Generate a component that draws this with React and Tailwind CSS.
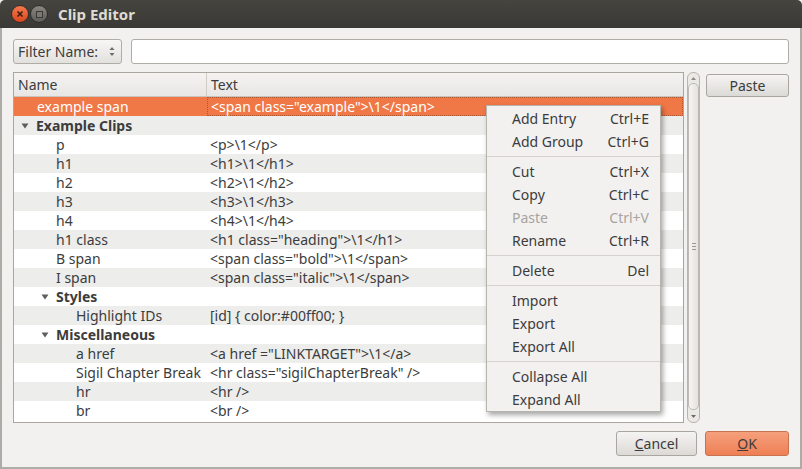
import React from "react";

const FONT = { fontFamily: '"Noto Sans", "Open Sans", sans-serif' };

const rows = [
  { name: "example span", text: '<span class="example">\\1</span>', indent: 37, selected: true },
  { name: "Example Clips", group: true, arrow: 21, indent: 36 },
  { name: "p", text: "<p>\\1</p>", indent: 56 },
  { name: "h1", text: "<h1>\\1</h1>", indent: 56 },
  { name: "h2", text: "<h2>\\1</h2>", indent: 56 },
  { name: "h3", text: "<h3>\\1</h3>", indent: 56 },
  { name: "h4", text: "<h4>\\1</h4>", indent: 56 },
  { name: "h1 class", text: '<h1 class="heading">\\1</h1>', indent: 56 },
  { name: "B span", text: '<span class="bold">\\1</span>', indent: 56 },
  { name: "I span", text: '<span class="italic">\\1</span>', indent: 56 },
  { name: "Styles", group: true, arrow: 41, indent: 56 },
  { name: "Highlight IDs", text: "[id] { color:#00ff00; }", indent: 76 },
  { name: "Miscellaneous", group: true, arrow: 41, indent: 56 },
  { name: "a href", text: '<a href ="LINKTARGET">\\1</a>', indent: 76 },
  { name: "Sigil Chapter Break", text: '<hr class="sigilChapterBreak" />', indent: 76 },
  { name: "hr", text: "<hr />", indent: 76 },
  { name: "br", text: "<br />", indent: 76 },
];

const menu = [
  [["Add Entry", "Ctrl+E"], ["Add Group", "Ctrl+G"]],
  [["Cut", "Ctrl+X"], ["Copy", "Ctrl+C"], ["Paste", "Ctrl+V", true], ["Rename", "Ctrl+R"]],
  [["Delete", "Del"]],
  [["Import"], ["Export"], ["Export All"]],
  [["Collapse All"], ["Expand All"]],
];

function Arrow() {
  return (
    <svg width="8" height="6" viewBox="0 0 8 6" className="shrink-0">
      <path d="M0.5 0.5 L7.5 0.5 L4 5.5 Z" fill="#5f5e5a" />
    </svg>
  );
}

function TreeRow({ r, i }) {
  const bg = r.selected ? "bg-[#f07746]" : i % 2 === 1 ? "bg-[#ededec]" : "bg-white";
  const color = r.selected ? "text-white" : "text-[#3c3c3c]";
  return (
    <div className={`flex h-[19px] items-center ${bg} ${color}`}>
      <div className="relative h-full w-[193px] shrink-0 flex items-center">
        {r.group && (
          <span className="absolute top-[7px]" style={{ left: r.arrow - 14 }}>
            <Arrow />
          </span>
        )}
        <span
          className={`whitespace-nowrap ${r.group ? "font-bold" : ""}`}
          style={{ paddingLeft: r.indent - 14 }}
        >
          {r.name}
        </span>
      </div>
      <div
        className={`h-full flex-1 flex items-center pl-[3px] whitespace-nowrap ${
          r.selected ? "border border-dotted border-[#b3532b]" : ""
        }`}
      >
        {r.text}
      </div>
    </div>
  );
}

function Scrollbar() {
  return (
    <div className="ml-[3px] w-[13px] h-[351px] rounded-[6px] border border-[#b8b5ae] bg-[#ebe9e6] flex flex-col items-center">
      <div className="h-[10px] flex items-center justify-center">
        <svg width="5" height="3" viewBox="0 0 5 3"><path d="M0 3 L2.5 0 L5 3 Z" fill="#8e8b85" /></svg>
      </div>
      <div className="flex-1 w-[11px] rounded-[5px] border border-[#bdbab4] bg-gradient-to-r from-[#f6f5f4] to-[#e4e2de] flex items-center justify-center">
        <div className="flex flex-col gap-[2px]">
          <div className="w-[4px] h-px bg-[#9c9891]" />
          <div className="w-[4px] h-px bg-[#9c9891]" />
          <div className="w-[4px] h-px bg-[#9c9891]" />
        </div>
      </div>
      <div className="h-[12px] flex items-center justify-center">
        <svg width="5" height="3" viewBox="0 0 5 3"><path d="M0 0 L2.5 3 L5 0 Z" fill="#6e6b65" /></svg>
      </div>
    </div>
  );
}

function Button({ children, primary, className = "" }) {
  return (
    <div
      className={`flex items-center justify-center rounded-[3px] border ${
        primary
          ? "border-[#c8734f] bg-gradient-to-b from-[#f5a07c] to-[#ee7f55] text-[#3c3c3c]"
          : "border-[#a9a69f] bg-gradient-to-b from-[#f5f4f3] to-[#dcdad6] text-[#3c3c3c]"
      } ${className}`}
    >
      {children}
    </div>
  );
}

export default function App() {
  return (
    <div className="w-[802px] h-[469px] text-[14px] text-[#3c3c3c] bg-[#f2f1f0] flex flex-col overflow-hidden" style={FONT}>
      <div className="h-[28px] shrink-0 bg-gradient-to-b from-[#45443f] to-[#3a3935] flex items-center pl-[11px] rounded-t-[5px]">
        <div className="w-[18px] h-[18px] rounded-full bg-gradient-to-b from-[#f4784b] to-[#d9461c] border border-[#2f2e2b] flex items-center justify-center">
          <svg width="8" height="8" viewBox="0 0 8 8"><path d="M1.5 1.5 L6.5 6.5 M6.5 1.5 L1.5 6.5" stroke="#3a1d10" strokeWidth="1.6" /></svg>
        </div>
        <div className="ml-[1px] w-[18px] h-[18px] rounded-full bg-gradient-to-b from-[#8a8781] to-[#5f5d58] border border-[#2f2e2b] flex items-center justify-center">
          <div className="w-[7px] h-[7px] border-[1.5px] border-[#3a3935] bg-[#7b7873]" />
        </div>
        <span className="ml-[10px] font-bold text-[15px] text-[#dfdbd2]">Clip Editor</span>
      </div>

      <div className="flex-1 flex flex-col border-x-2 border-b-2 border-[#aeaca6] px-[11px] pt-[11px] pb-[9px]">
        <div className="flex items-center gap-[9px] h-[25px]">
          <div className="w-[109px] h-[25px] rounded-[3px] border border-[#b0ada6] bg-gradient-to-b from-[#f7f6f5] to-[#e3e1de] flex items-center pl-[4px] pr-[6px] justify-between">
            <span>Filter Name:</span>
            <svg width="6" height="11" viewBox="0 0 6 11">
              <path d="M0.5 4 L3 1 L5.5 4 Z" fill="#6f6c66" />
              <path d="M0.5 7 L3 10 L5.5 7 Z" fill="#6f6c66" />
            </svg>
          </div>
          <div className="flex-1 h-[25px] rounded-[3px] border border-[#b0ada6] bg-white" />
        </div>

        <div className="flex mt-[8px]">
          <div className="w-[671px] h-[351px] border border-[#a9a69f] bg-white flex flex-col overflow-hidden">
            <div className="h-[24px] shrink-0 flex border-b border-[#c8c5bf] bg-gradient-to-b from-[#f4f3f2] to-[#e9e7e4]">
              <div className="w-[193px] border-r border-[#cfccc6] flex items-center pl-[4px]">Name</div>
              <div className="flex-1 flex items-center pl-[4px]">Text</div>
            </div>
            {rows.map((r, i) => (
              <TreeRow key={i} r={r} i={i} />
            ))}
          </div>
          <Scrollbar />
          <div className="flex-1 pl-[6px] pt-[2px]">
            <Button className="h-[23px]">Paste</Button>
          </div>
        </div>

        <div className="flex justify-end gap-[8px] mt-[8px]">
          <Button className="w-[81px] h-[25px]">
            <span><span className="underline">C</span>ancel</span>
          </Button>
          <Button primary className="w-[84px] h-[25px]">
            <span><span className="underline">O</span>K</span>
          </Button>
        </div>
      </div>

      <div className="absolute left-[486px] top-[105px] w-[175px] border border-[#b7b4ad] bg-[#f2f1f0] shadow-[2px_3px_5px_rgba(0,0,0,0.35)]">
        {menu.map((group, gi) => (
          <div key={gi} className={gi > 0 ? "border-t border-[#d5d2cd] pt-[3px] mt-[3px]" : "pt-[1px]"}>
            {group.map(([label, sc, dis]) => (
              <div
                key={label}
                className={`h-[23px] flex items-center justify-between pl-[25px] pr-[11px] ${
                  dis ? "text-[#a7a49f]" : "text-[#3c3c3c]"
                }`}
              >
                <span>{label}</span>
                {sc && <span>{sc}</span>}
              </div>
            ))}
          </div>
        ))}
      </div>
    </div>
  );
}
